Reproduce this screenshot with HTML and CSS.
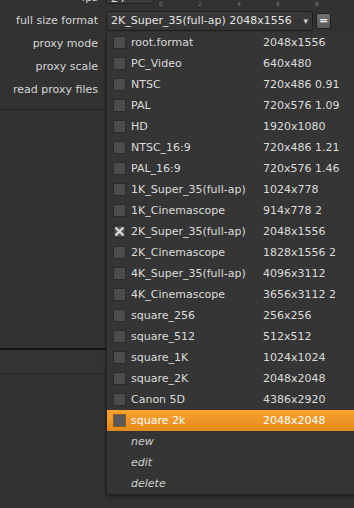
FILE: index.html
```html
<!DOCTYPE html>
<html>
  <head>
    <title>Format</title>
    <link rel="stylesheet" href="styles.css">
  </head>
  <body>
    <div class="panel">
      <div class="row fps-row">
        <div class="label">fps</div>
        <div class="field">24</div>
        <div class="ruler"><span>0</span><span>2</span><span>4</span><span>6</span><span>8</span></div>
      </div>
      <div class="row">
        <div class="label">full size format</div>
        <div class="picker">
          <span>2K_Super_35(full-ap) 2048x1556</span>
          <span class="arrow">&#9662;</span>
        </div>
        <div class="eq-btn">=</div>
      </div>
      <div class="row"><div class="label">proxy mode</div></div>
      <div class="row"><div class="label">proxy scale</div></div>
      <div class="row"><div class="label">read proxy files</div></div>
      <div class="sep"></div>
      <div class="spacer"></div>
      <div class="sep dark"></div>
      <div class="band"></div>
      <div class="sep faint"></div>
    </div>

    <!-- open format menu -->
    <div class="menu">
      <div class="item"><span class="box"></span><span class="name">root.format</span><span class="size">2048x1556</span></div>
      <div class="item"><span class="box"></span><span class="name">PC_Video</span><span class="size">640x480</span></div>
      <div class="item"><span class="box"></span><span class="name">NTSC</span><span class="size">720x486 0.91</span></div>
      <div class="item"><span class="box"></span><span class="name">PAL</span><span class="size">720x576 1.09</span></div>
      <div class="item"><span class="box"></span><span class="name">HD</span><span class="size">1920x1080</span></div>
      <div class="item"><span class="box"></span><span class="name">NTSC_16:9</span><span class="size">720x486 1.21</span></div>
      <div class="item"><span class="box"></span><span class="name">PAL_16:9</span><span class="size">720x576 1.46</span></div>
      <div class="item"><span class="box"></span><span class="name">1K_Super_35(full-ap)</span><span class="size">1024x778</span></div>
      <div class="item"><span class="box"></span><span class="name">1K_Cinemascope</span><span class="size">914x778 2</span></div>
      <div class="item"><span class="box checked"><svg width="13" height="13" viewBox="0 0 13 13"><path d="M3.5 3.5 L9.5 9.5 M9.5 3.5 L3.5 9.5" stroke="#d8d8d8" stroke-width="2.4" stroke-linecap="square"/></svg></span><span class="name">2K_Super_35(full-ap)</span><span class="size">2048x1556</span></div>
      <div class="item"><span class="box"></span><span class="name">2K_Cinemascope</span><span class="size">1828x1556 2</span></div>
      <div class="item"><span class="box"></span><span class="name">4K_Super_35(full-ap)</span><span class="size">4096x3112</span></div>
      <div class="item"><span class="box"></span><span class="name">4K_Cinemascope</span><span class="size">3656x3112 2</span></div>
      <div class="item"><span class="box"></span><span class="name">square_256</span><span class="size">256x256</span></div>
      <div class="item"><span class="box"></span><span class="name">square_512</span><span class="size">512x512</span></div>
      <div class="item"><span class="box"></span><span class="name">square_1K</span><span class="size">1024x1024</span></div>
      <div class="item"><span class="box"></span><span class="name">square_2K</span><span class="size">2048x2048</span></div>
      <div class="item"><span class="box"></span><span class="name">Canon 5D</span><span class="size">4386x2920</span></div>
      <div class="item active"><span class="box"></span><span class="name">square 2k</span><span class="size">2048x2048</span></div>
      <div class="item action">new</div>
      <div class="item action">edit</div>
      <div class="item action">delete</div>
    </div>
  </body>
</html>
```
FILE: styles.css
```css
html, body {
  margin: 0;
  height: 100%;
  overflow: hidden;
}
body {
  background: #323232;
  font-family: "DejaVu Sans", Verdana, sans-serif;
  font-size: 11px;
  color: #d6d6d6;
  position: relative;
}
.panel {
  display: flex; flex-direction: column;
}
.row {
  display: flex; align-items: center;
  height: 23px;
}
.fps-row {
  margin-top: -15px;
  height: 22px;
  align-items: flex-start;
  margin-bottom: 2px;
}
.label {
  flex: none;
  text-align: right;
  padding-right: 8px;
  box-sizing: border-box;
  width: 106px;
  line-height: 19px;
}
.fps-row .label {
  padding-top: 3px;
}
.field {
  width: 72px; height: 19px;
  box-sizing: border-box;
  overflow: hidden;
  background: #3c3c3c;
  border: 1px solid #1f1f1f; border-radius: 2px;
  padding: 4px 0 0 4px;
  line-height: 17px;
  color: #e0e0e0;
}
.ruler {
  align-self: flex-end;
  display: flex;
  margin-left: 5px;
  margin-bottom: -1px;
  font-size: 6px; line-height: 8px;
  color: #7a7a7a;
}
.ruler span {
  width: 39px;
}
.picker {
  display: flex; align-items: center; justify-content: space-between;
  width: 207px; height: 20px;
  box-sizing: border-box;
  background: linear-gradient(#3a3a3a, #333333);
  border: 1px solid #1e1e1e; border-radius: 3px;
  padding: 0 4px 0 4px;
  color: #e4e4e4;
}
.arrow {
  font-size: 9px;
  color: #cfcfcf;
}
.eq-btn {
  width: 15px; height: 16px;
  margin-left: 3px;
  box-sizing: border-box;
  background: linear-gradient(#707070, #585858);
  border: 1px solid #202020; border-radius: 2px;
  text-align: center;
  line-height: 13px;
  font-weight: bold;
  color: #f2f2f2;
}
.sep {
  height: 1px;
  margin-top: 8px;
  background: #222222;
}
.spacer {
  height: 238px;
}
.sep.dark {
  margin-top: 0;
  height: 2px;
  background: #131313;
}
.band {
  height: 23px;
  background: #333333;
}
.sep.faint {
  margin-top: 0;
  background: #282828;
}
.menu {
  position: absolute;
  left: 106px; top: 32px;
  width: 260px;
  background: #353535;
  border-left: 1px solid #242424;
  box-shadow: 0 3px 4px rgba(0, 0, 0, 0.35);
}
.item {
  display: flex; align-items: center;
  height: 21px;
  padding-left: 6px;
  color: #dcdcdc;
}
.box {
  width: 13px; height: 13px;
  box-sizing: border-box;
  flex: none;
  background: #4c4c4c;
  border: 1px solid #2a2a2a; border-radius: 1px;
  margin-right: 5px;
}
.box svg {
  display: block;
  margin: -1px;
}
.name {
  width: 132px;
}
.active {
  background: linear-gradient(#f9a330, #e38a1c);
  color: #ffffff;
}
.active .box {
  background: #595959;
  border-color: #8a5a1e;
}
.action {
  padding-left: 24px;
  font-style: italic;
  color: #cfcfcf;
}
```
